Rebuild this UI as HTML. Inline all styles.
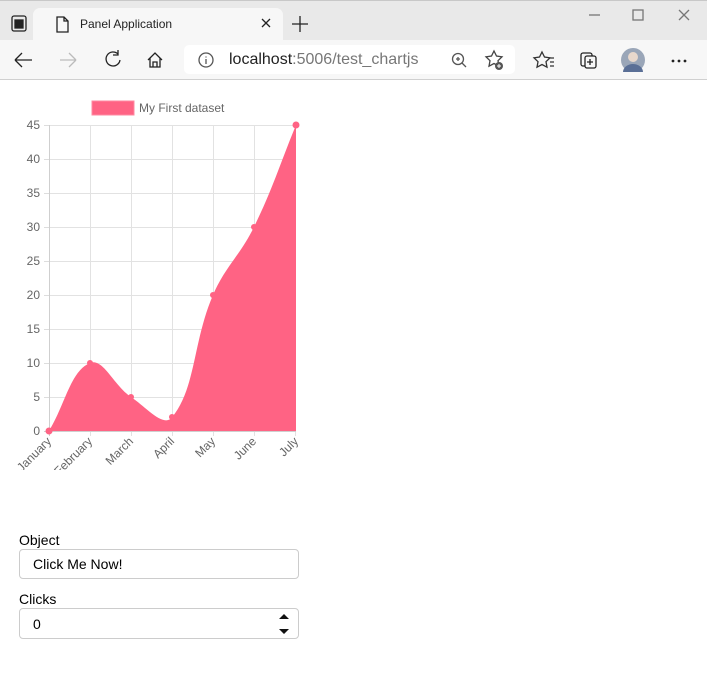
<!DOCTYPE html>
<html><head><meta charset="utf-8"><style>
*{margin:0;padding:0;box-sizing:border-box}
body{width:707px;height:688px;background:#fff;font-family:"Liberation Sans",sans-serif;position:relative;overflow:hidden}
.abs{position:absolute}
</style></head><body>
<div class="abs" style="left:0;top:0;width:707px;height:40px;background:#e9e9e9;border-top:1px solid #c8c8c8"></div>
<div class="abs" style="left:33px;top:8px;width:250px;height:32px;background:#f7f7f7;border-radius:7px 7px 0 0"></div>
<div class="abs" style="left:0;top:40px;width:707px;height:40px;background:#f7f7f7;border-bottom:1px solid #d0d0d0"></div>
<svg class="abs" style="left:0;top:0" width="707" height="80">
 <g fill="none" stroke="#222" stroke-width="1.3">
  <rect x="12" y="16" width="14" height="15" rx="2"/><rect x="15" y="20" width="8" height="8" fill="#222"/>
  <path d="M57 17h7l4 4v11h-11z M64 17v4h4"/>
  <path d="M262 19l8 8M270 19l-8 8"/>
  <path d="M300 16v16M292 24h16"/>
  <path d="M589 15h11" stroke="#777"/><rect x="633" y="10" width="10" height="10" stroke="#777"/>
  <path d="M679 10l10 10M689 10l-10 10" stroke="#777"/>
  <path d="M15 60h17M15 60l7-7M15 60l7 7"/>
  <path d="M60 60h16M76 60l-7-7M76 60l-7 7" stroke="#bbb"/>
  <path d="M118 54a7 7 0 1 0 2 6M118 50v5h-5"/>
  <path d="M148 60l7-7 7 7M150 58v9h10v-9M153 67v-5h4v5"/>
  <circle cx="206" cy="60" r="7" stroke="#555"/><path d="M206 57v0.5M206 59v5" stroke="#555"/>
  <circle cx="458" cy="59" r="5.5" stroke="#555"/><path d="M462 63l4 4M456 59h4M458 57v4" stroke="#555"/>
  <path d="M494 51l2.5 5 5.5.8-4 3.9 1 5.5-5-2.7-5 2.7 1-5.5-4-3.9 5.5-.8z" stroke="#444"/>
  <path d="M542 52l2.5 5 5.5.8-4 3.9 1 5.5-5-2.7-5 2.7 1-5.5-4-3.9 5.5-.8z M549 58h5M550 62h4M550 66h4" stroke="#333"/>
  <rect x="581" y="53" width="11" height="13" rx="2"/><rect x="585" y="56" width="11" height="12" rx="2" fill="#f7f7f7"/><path d="M590 59v6M587 62h6"/>
 </g>
 <circle cx="499" cy="66" r="4" fill="#555"/><path d="M499 64v4M497 66h4" stroke="#fff" stroke-width="1"/>
 <circle cx="633" cy="60" r="12" fill="#9aa6b8"/><circle cx="633" cy="57" r="5" fill="#e8d8cc"/><path d="M623 72a10 8 0 0 1 20 0z" fill="#5a6f96"/>
 <circle cx="673" cy="61" r="1.4" fill="#222"/><circle cx="679" cy="61" r="1.4" fill="#222"/><circle cx="685" cy="61" r="1.4" fill="#222"/>
</svg>
<div class="abs" style="left:184px;top:45px;width:331px;height:29px;background:#fff;border-radius:5px;z-index:-0"></div>
<svg class="abs" style="left:0;top:0" width="707" height="80">
 <g fill="none" stroke-width="1.3"><circle cx="206" cy="60" r="7" stroke="#555"/><path d="M206 56.5v1M206 59v5" stroke="#555"/>
 <circle cx="458" cy="59" r="5.5" stroke="#555"/><path d="M462 63l4 4M456 59h4M458 57v4" stroke="#555"/>
 <path d="M494 51l2.5 5 5.5.8-4 3.9 1 5.5-5-2.7-5 2.7 1-5.5-4-3.9 5.5-.8z" stroke="#444"/></g>
 <circle cx="499" cy="66" r="4" fill="#555"/><path d="M499 64v4M497 66h4" stroke="#fff" stroke-width="1"/>
</svg>
<div class="abs" style="left:80px;top:17px;font-size:12px;color:#222">Panel Application</div>
<div class="abs" style="left:229px;top:51px;font-size:16px;color:#222">localhost<span style="color:#777">:5006/test_chartjs</span></div>

<svg class="abs" style="left:0;top:90px" width="310" height="380" viewBox="0 90 310 380" font-family="Liberation Sans" font-size="12" fill="#666">
 <rect x="92" y="101" width="42" height="14" fill="#ff6384" stroke="#ff8aa2"/>
 <text x="139" y="112">My First dataset</text>
 <g stroke="#e2e2e2" stroke-width="1">
  <path d="M49 125.5H296M49 159.5H296M49 193.5H296M49 227.5H296M49 261.5H296M49 295.5H296M49 329.5H296M49 363.5H296M49 397.5H296"/>
  <path d="M90.5 125V436M131.5 125V436M172.5 125V436M213.5 125V436M254.5 125V436M295.5 125V436"/>
 </g>
 <path d="M44 431.5H296M49.5 125V436" stroke="#cfcfcf"/>
 <path d="M44 125.5h5M44 159.5h5M44 193.5h5M44 227.5h5M44 261.5h5M44 295.5h5M44 329.5h5M44 363.5h5M44 397.5h5" stroke="#ddd"/>
 <path d="M49 431 C65.4 403.8 70.4 371.1 90 363 C103.2 357.5 113.4 385.3 131 397 C146.2 407.1 163.4 428.1 172 417.4 C196.2 387.3 192.7 342.2 213 295 C225.5 266.1 240.1 255.4 254 227 C273.3 187.4 279.2 165.8 296 125 L296 431 Z" fill="#ff6384"/>
 <g fill="#ff6384"><circle cx="49" cy="431" r="3.5"/><circle cx="90" cy="363" r="3"/><circle cx="131" cy="397" r="3"/><circle cx="172" cy="417" r="3"/><circle cx="213" cy="295" r="3"/><circle cx="254" cy="227" r="3"/><circle cx="296" cy="125" r="3.5"/></g>
 <g text-anchor="end">
  <text x="40" y="129">45</text><text x="40" y="163">40</text><text x="40" y="197">35</text><text x="40" y="231">30</text><text x="40" y="265">25</text><text x="40" y="299">20</text><text x="40" y="333">15</text><text x="40" y="367">10</text><text x="40" y="401">5</text><text x="40" y="435">0</text>
  <text transform="translate(52,442) rotate(-45)">January</text>
  <text transform="translate(93,442) rotate(-45)">February</text>
  <text transform="translate(134,442) rotate(-45)">March</text>
  <text transform="translate(175,442) rotate(-45)">April</text>
  <text transform="translate(216,442) rotate(-45)">May</text>
  <text transform="translate(257,442) rotate(-45)">June</text>
  <text transform="translate(299,442) rotate(-45)">July</text>
 </g>
</svg>

<div class="abs" style="left:19px;top:532px;font-size:14px;color:#000">Object</div>
<div class="abs" style="left:19px;top:549px;width:280px;height:30px;border:1px solid #ccc;border-radius:4px;font-size:14px;padding:6px 0 0 13px;color:#000">Click Me Now!</div>
<div class="abs" style="left:19px;top:591px;font-size:14px;color:#000">Clicks</div>
<div class="abs" style="left:19px;top:608px;width:280px;height:31px;border:1px solid #ccc;border-radius:4px;font-size:14px;padding:7px 0 0 13px;color:#000">0</div>
<svg class="abs" style="left:276px;top:612px" width="16" height="24"><path d="M3 7l5-5 5 5z M3 17l5 5 5-5z" fill="#111"/></svg>
</body></html>
